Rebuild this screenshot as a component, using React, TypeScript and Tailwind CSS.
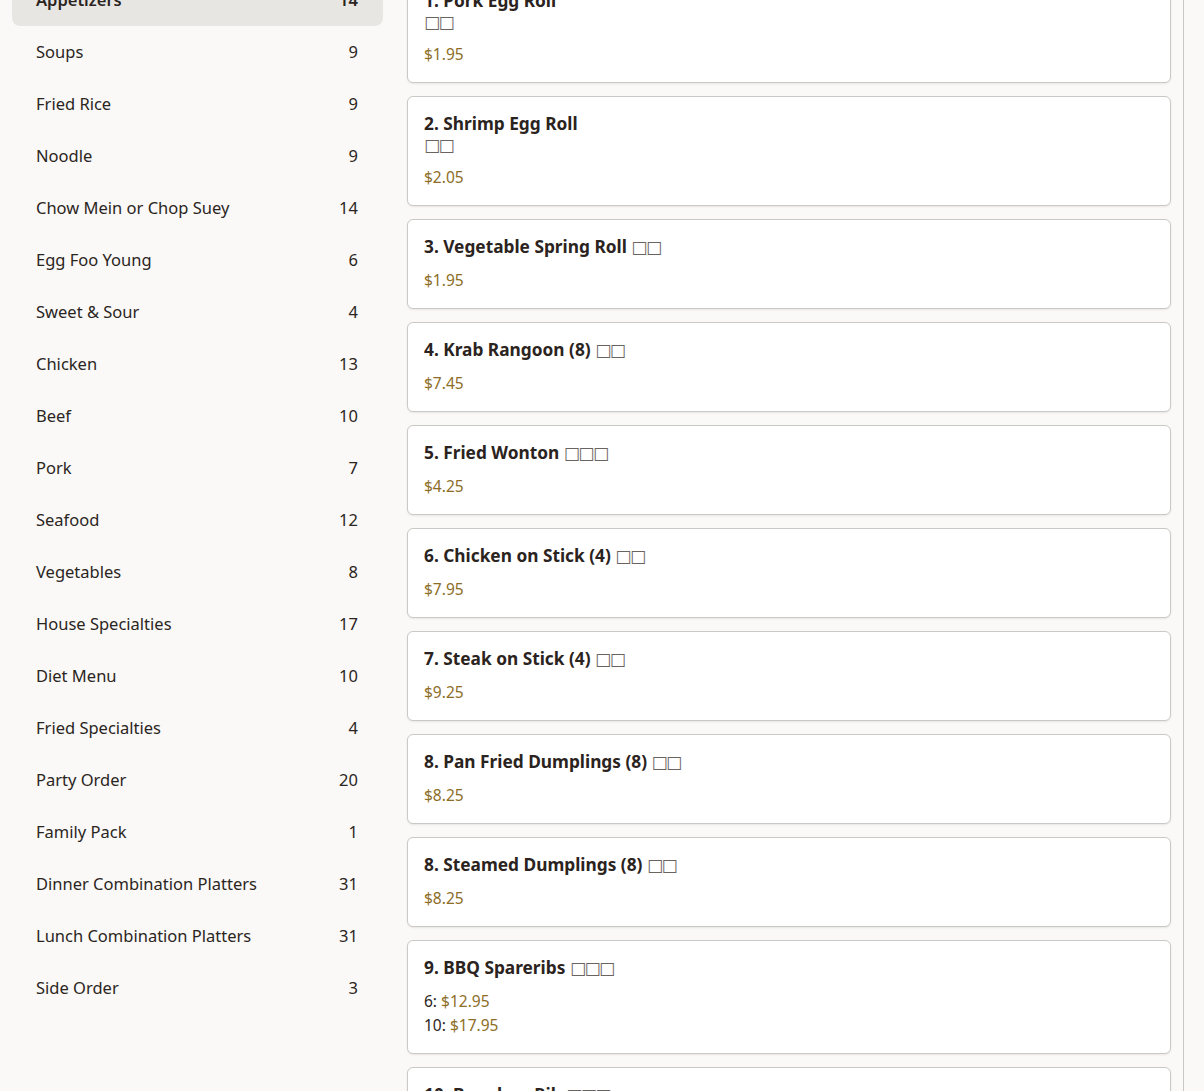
const categories: [string, number][] = [
  ["Appetizers", 14],
  ["Soups", 9],
  ["Fried Rice", 9],
  ["Noodle", 9],
  ["Chow Mein or Chop Suey", 14],
  ["Egg Foo Young", 6],
  ["Sweet & Sour", 4],
  ["Chicken", 13],
  ["Beef", 10],
  ["Pork", 7],
  ["Seafood", 12],
  ["Vegetables", 8],
  ["House Specialties", 17],
  ["Diet Menu", 10],
  ["Fried Specialties", 4],
  ["Party Order", 20],
  ["Family Pack", 1],
  ["Dinner Combination Platters", 31],
  ["Lunch Combination Platters", 31],
  ["Side Order", 3],
];

type Item = {
  name: string;
  zh: string;
  breakZh?: boolean;
  prices: { label?: string; value: string }[];
};

const items: Item[] = [
  { name: "1. Pork Egg Roll", zh: "□□", breakZh: true, prices: [{ value: "$1.95" }] },
  { name: "2. Shrimp Egg Roll", zh: "□□", breakZh: true, prices: [{ value: "$2.05" }] },
  { name: "3. Vegetable Spring Roll", zh: "□□", prices: [{ value: "$1.95" }] },
  { name: "4. Krab Rangoon (8)", zh: "□□", prices: [{ value: "$7.45" }] },
  { name: "5. Fried Wonton", zh: "□□□", prices: [{ value: "$4.25" }] },
  { name: "6. Chicken on Stick (4)", zh: "□□", prices: [{ value: "$7.95" }] },
  { name: "7. Steak on Stick (4)", zh: "□□", prices: [{ value: "$9.25" }] },
  { name: "8. Pan Fried Dumplings (8)", zh: "□□", prices: [{ value: "$8.25" }] },
  { name: "8. Steamed Dumplings (8)", zh: "□□", prices: [{ value: "$8.25" }] },
  {
    name: "9. BBQ Spareribs",
    zh: "□□□",
    prices: [
      { label: "6:", value: "$12.95" },
      { label: "10:", value: "$17.95" },
    ],
  },
  { name: "10. Boneless Rib", zh: "□□□", prices: [{ value: "$9.95" }] },
];

function Tofu({ text, block }: { text: string; block?: boolean }) {
  return (
    <span
      className={
        "font-['DejaVu_Sans',sans-serif] font-normal text-[17px] text-[#6a6461] tracking-[-1.5px] " +
        (block ? "block leading-[20px]" : "leading-none")
      }
    >
      {text}
    </span>
  );
}

export default function App() {
  return (
    <div className="bg-[#faf9f7] font-['Noto_Sans',sans-serif] text-[#2b2522] overflow-hidden h-[1091px]">
      <div className="flex -mt-[27px] w-[1184px] border-r border-[#c9c7c4] min-h-[1200px]">
        <aside className="w-[395px] shrink-0 px-3 pt-px">
          <ul>
            {categories.map(([name, count], i) => (
              <li
                key={name}
                className={
                  "flex items-center justify-between h-[52px] pl-6 pr-[25px] rounded-lg text-[16.5px] " +
                  (i === 0 ? "bg-[#e8e6e3] font-semibold" : "")
                }
              >
                <span>{name}</span>
                <span>{count}</span>
              </li>
            ))}
          </ul>
        </aside>
        <main className="flex-1 px-3 flex flex-col gap-[13px]">
          {items.map((it) => (
            <div
              key={it.name}
              className="bg-white border border-[#cbc9c6] rounded-md px-4 py-4 shadow-[0_1px_2px_rgba(0,0,0,0.08)]"
            >
              <h3 className="text-[17.3px] font-bold leading-[22px] text-[#2b2320]">
                {it.breakZh ? <span className="block">{it.name}</span> : it.name}
                {it.breakZh ? <Tofu text={it.zh} block /> : <> <Tofu text={it.zh} /></>}
              </h3>
              <div className="mt-[10px]">
                {it.prices.map((p) => (
                  <div key={p.value} className="leading-6 text-[15.5px]">
                    {p.label && <span className="text-[#2b2522]">{p.label} </span>}
                    <span className="text-[#8d6d26]">{p.value}</span>
                  </div>
                ))}
              </div>
            </div>
          ))}
        </main>
      </div>
    </div>
  );
}
